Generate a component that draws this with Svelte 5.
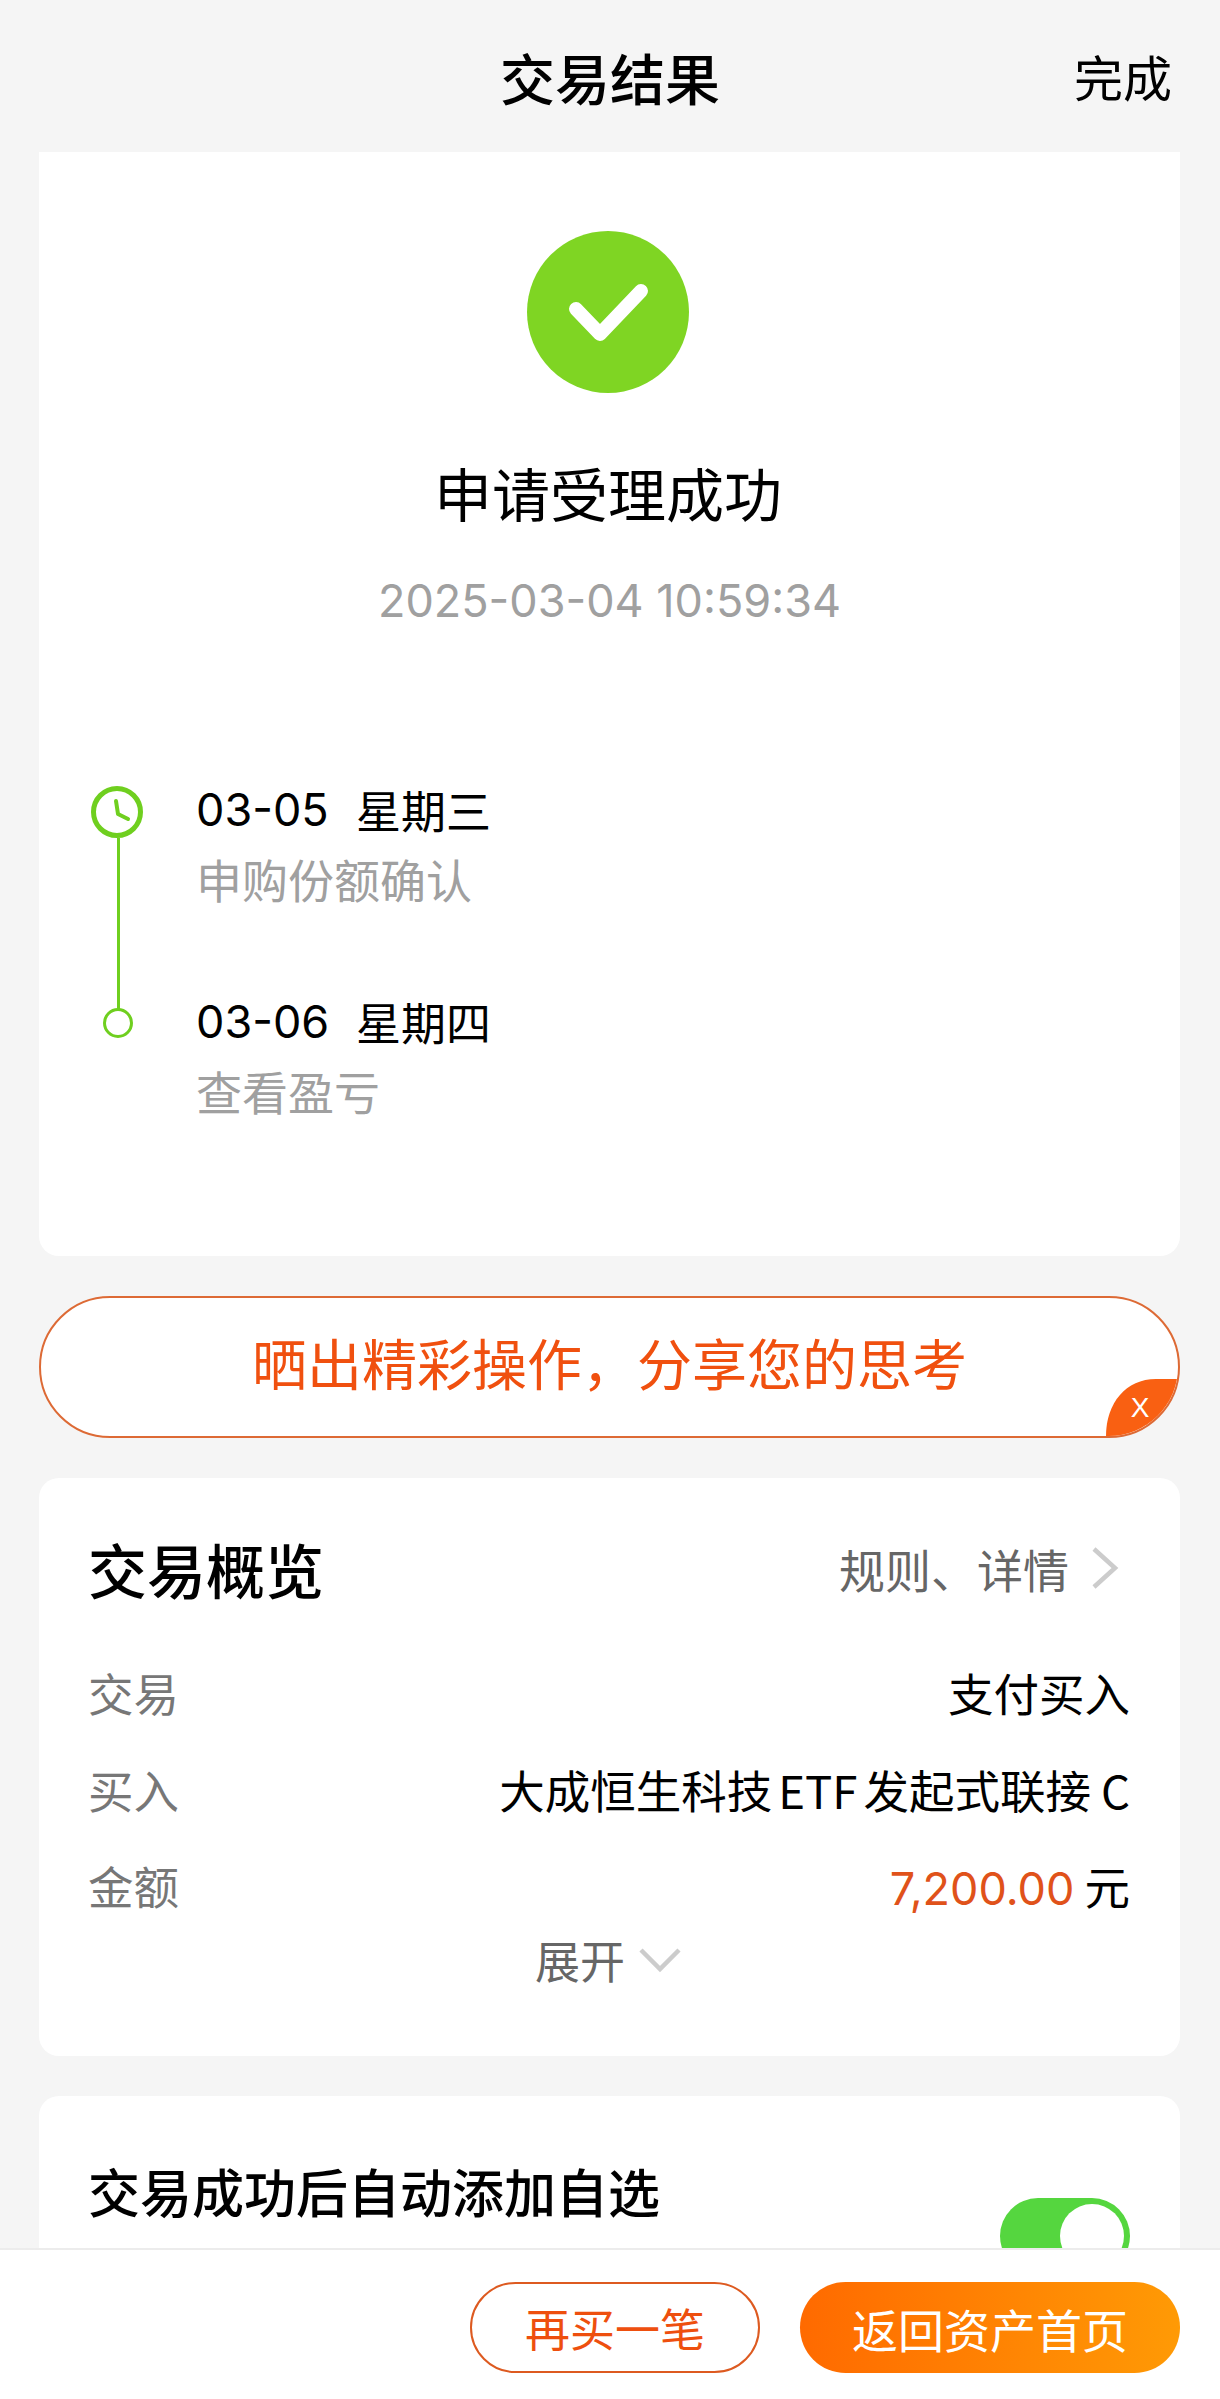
<script lang="ts">
    const steps = [
        { date: "03-05", week: "星期三", note: "申购份额确认" },
        { date: "03-06", week: "星期四", note: "查看盈亏" },
    ];
</script>

<div class="page">
    <header class="header">
        <div class="title">交易结果</div>
        <div class="done">完成</div>
    </header>

    <main class="content">
        <section class="card result">
            <div class="success">
                <svg viewBox="0 0 162 162" width="162" height="162">
                    <circle cx="81" cy="81" r="81" fill="#7fd523" />
                    <path d="M49 78 L73 103 L114 60" fill="none" stroke="#fff" stroke-width="14" stroke-linecap="round" stroke-linejoin="round" />
                </svg>
            </div>
            <div class="result-title">申请受理成功</div>
            <div class="result-time">2025-03-04 10:59:34</div>

            <div class="timeline">
                {#each steps as step, i}
                    <div class="step">
                        <div class="marker">
                            {#if i === 0}
                                <svg viewBox="0 0 52 52" width="52" height="52">
                                    <circle cx="26" cy="26" r="23.5" fill="#fff" stroke="#6fcf1f" stroke-width="5" />
                                    <path d="M25 15 L27 28 L37 33" fill="none" stroke="#6fcf1f" stroke-width="4" stroke-linecap="round" stroke-linejoin="round" />
                                </svg>
                                <span class="line"></span>
                            {:else}
                                <span class="dot"></span>
                            {/if}
                        </div>
                        <div class="step-text">
                            <div class="step-date"><span class="num">{step.date}</span><span class="week">{step.week}</span></div>
                            <div class="step-note">{step.note}</div>
                        </div>
                    </div>
                {/each}
            </div>
        </section>

        <section class="share">
            <span>晒出精彩操作，分享您的思考</span>
            <svg class="share-close" viewBox="0 0 72 57" width="72" height="57">
                <path d="M0 57 C0 24 20 0 50 0 H72 V57 Z" fill="#f96012" />
                <text x="34" y="38" text-anchor="middle" class="close-x">X</text>
            </svg>
        </section>

        <section class="card overview">
            <div class="overview-head">
                <h2>交易概览</h2>
                <div class="more">
                    规则、详情
                    <svg viewBox="0 0 28 44" width="28" height="44">
                        <path d="M3 3 L24 22 L3 41" fill="none" stroke="#cccccc" stroke-width="4.5" />
                    </svg>
                </div>
            </div>
            <div class="row">
                <span class="label">交易</span>
                <span class="value">支付买入</span>
            </div>
            <div class="row">
                <span class="label">买入</span>
                <span class="value">大成恒生科技<span class="latin">ETF</span>发起式联接<span class="latin-end">C</span></span>
            </div>
            <div class="row">
                <span class="label">金额</span>
                <span class="value"><span class="amount">7,200.00</span> 元</span>
            </div>
            <div class="expand">
                展开
                <svg viewBox="0 0 42 26" width="42" height="26">
                    <path d="M2 3 L21 22 L40 3" fill="none" stroke="#cccccc" stroke-width="4.5" />
                </svg>
            </div>
        </section>

        <section class="card auto">
            <div class="auto-title">交易成功后自动添加自选</div>
            <div class="toggle"><span class="knob"></span></div>
        </section>
    </main>

    <footer class="footer">
        <button class="btn outline">再买一笔</button>
        <button class="btn primary">返回资产首页</button>
    </footer>
</div>

<style>
    :global(body) {
        margin: 0;
        background: #f5f5f5;
    }
    .page {
        width: 1220px;
        height: 2399px;
        display: flex;
        flex-direction: column;
        overflow: hidden;
        background: #f5f5f5;
        font-family: "Noto Sans CJK SC", "Noto Sans", sans-serif;
        color: #000;
    }
    .header {
        flex: 0 0 152px;
        display: flex;
        align-items: center;
        justify-content: center;
        position: relative;
    }
    .title {
        font-size: 55px;
        font-weight: 500;
    }
    .done {
        position: absolute;
        right: 48px;
        top: 46px;
        font-size: 49px;
        line-height: 60px;
    }
    .content {
        flex: 1;
        min-height: 0;
        overflow: hidden;
        padding: 0 40px 0 39px;
        display: flex;
        flex-direction: column;
        gap: 40px;
    }
    .card {
        background: #fff;
        border-radius: 20px;
        flex: none;
    }
    .result {
        height: 1104px;
        border-radius: 0 0 20px 20px;
        box-sizing: border-box;
        padding-top: 79px;
    }
    .success {
        display: flex;
        justify-content: center;
        height: 162px;
        padding-right: 3px;
    }
    .result-title {
        margin-top: 59px;
        padding-right: 3px;
        text-align: center;
        font-size: 58px;
        line-height: 80px;
    }
    .result-time {
        margin-top: 39px;
        text-align: center;
        font-size: 45px;
        line-height: 60px;
        color: #a0a0a0;
        font-family: "Inter", "Noto Sans CJK SC", sans-serif;
    }
    .timeline {
        margin-top: 151px;
        padding-left: 52px;
    }
    .step {
        display: flex;
        height: 212px;
    }
    .marker {
        width: 52px;
        display: flex;
        flex-direction: column;
        align-items: center;
        margin-right: 53px;
    }
    .marker svg {
        flex: none;
        margin-top: 4px;
    }
    .line {
        flex: none;
        width: 3px;
        height: 171px;
        margin-left: 2px;
        background: #6fcf1f;
    }
    .dot {
        box-sizing: border-box;
        width: 30px;
        height: 30px;
        margin-top: 14px;
        margin-left: 2px;
        border: 3px solid #6fcf1f;
        border-radius: 50%;
        background: #fff;
    }
    .step-date {
        padding-top: 2px;
        font-size: 45px;
        line-height: 52px;
        display: flex;
    }
    .num {
        font-family: "Inter", sans-serif;
        width: 160px;
    }
    .step-note {
        margin-top: 16px;
        font-size: 46px;
        line-height: 52px;
        color: #a0a0a0;
    }
    .share {
        height: 142px;
        box-sizing: border-box;
        padding-bottom: 12px;
        border: 2px solid #dd6a35;
        border-radius: 71px;
        background: #fff;
        display: flex;
        align-items: center;
        justify-content: center;
        position: relative;
        font-size: 55px;
        color: #f0500f;
        flex: none;
        overflow: hidden;
    }
    .share-close {
        position: absolute;
        right: 0;
        bottom: 0;
    }
    .close-x {
        font-family: "Liberation Sans", sans-serif;
        font-size: 28px;
        font-weight: 400;
        fill: #fff;
    }
    .overview {
        height: 578px;
        box-sizing: border-box;
        padding: 56px 50px 0 49px;
    }
    .overview-head {
        display: flex;
        align-items: center;
        justify-content: space-between;
        height: 68px;
        margin-bottom: 42px;
    }
    h2 {
        margin: 0;
        font-size: 59px;
        font-weight: 500;
    }
    .more {
        display: flex;
        align-items: center;
        gap: 22px;
        font-size: 46px;
        color: #666;
        padding-right: 11px;
    }
    .row {
        display: flex;
        align-items: center;
        justify-content: space-between;
        height: 96.5px;
        font-size: 45.5px;
    }
    .label {
        color: #777;
    }
    .latin {
        margin: 0 6px;
    }
    .latin-end {
        margin-left: 10px;
    }
    .amount {
        color: #e0521a;
        font-family: "Inter", sans-serif;
        font-size: 45px;
    }
    .expand {
        display: flex;
        align-items: center;
        justify-content: center;
        gap: 14px;
        font-size: 45px;
        color: #666;
        height: 60px;
        margin-top: -4px;
        padding-right: 2px;
    }
    .auto {
        position: relative;
        height: 300px;
        box-sizing: border-box;
        padding: 57px 50px 0 49px;
    }
    .auto-title {
        font-size: 52px;
        line-height: 76px;
        font-weight: 500;
    }
    .toggle {
        position: absolute;
        right: 50px;
        top: 102px;
        width: 130px;
        height: 76px;
        border-radius: 38px;
        background: #55d63f;
    }
    .knob {
        position: absolute;
        right: 6px;
        top: 6px;
        width: 64px;
        height: 64px;
        border-radius: 50%;
        background: #fff;
    }
    .footer {
        flex: 0 0 151px;
        box-sizing: border-box;
        background: #fff;
        border-top: 2px solid #ececec;
        display: flex;
        justify-content: flex-end;
        align-items: flex-start;
        gap: 40px;
        padding: 32px 40px 0 0;
    }
    .btn {
        height: 91px;
        border-radius: 46px;
        font-family: inherit;
        padding: 0;
    }
    .outline {
        width: 290px;
        background: #fff;
        border: 2px solid #dd5a20;
        color: #ee4f0e;
        font-size: 45px;
    }
    .primary {
        width: 380px;
        border: none;
        color: #fff;
        font-size: 46px;
        background: linear-gradient(90deg, #ff6a00, #ff9a05);
    }
</style>
